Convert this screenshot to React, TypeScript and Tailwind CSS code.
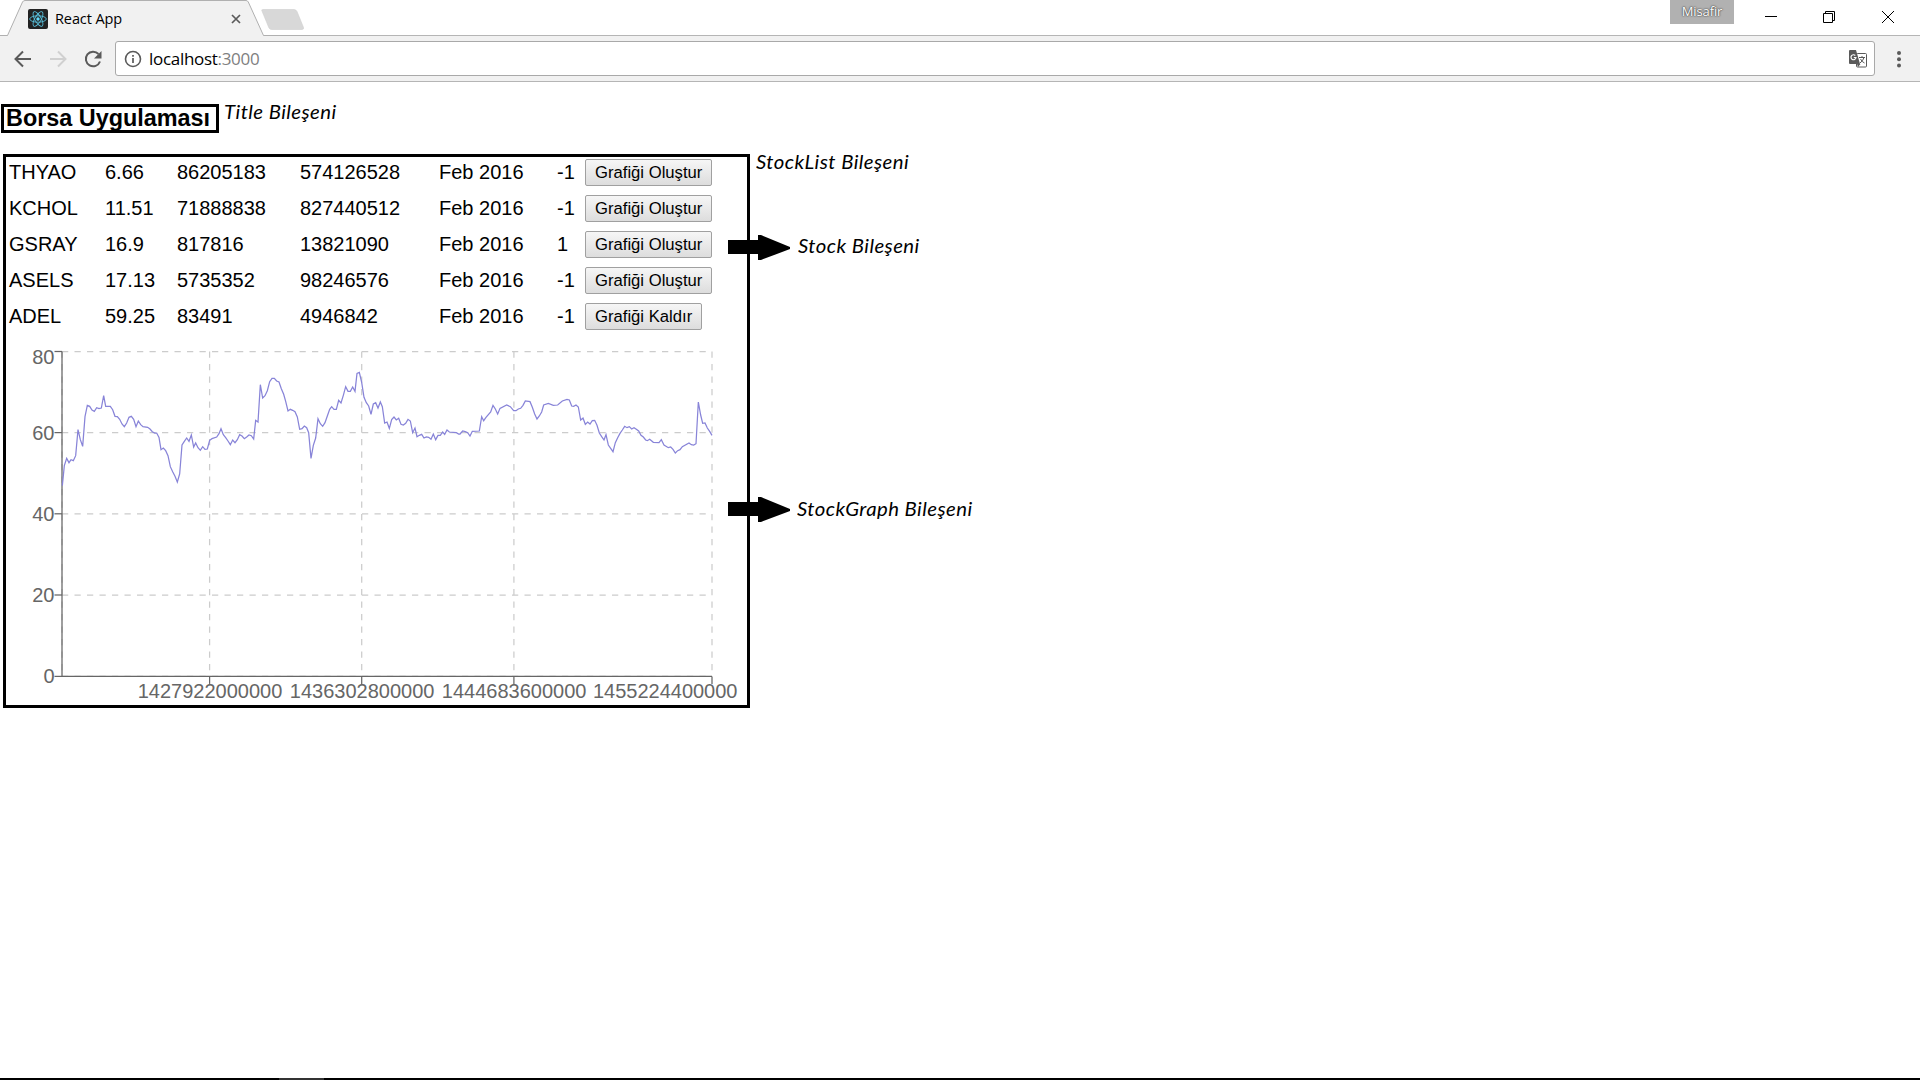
import type { ReactNode } from "react";

const stocks = [
  ["THYAO", "6.66", "86205183", "574126528", "Feb 2016", "-1", "Grafiği Oluştur"],
  ["KCHOL", "11.51", "71888838", "827440512", "Feb 2016", "-1", "Grafiği Oluştur"],
  ["GSRAY", "16.9", "817816", "13821090", "Feb 2016", "1", "Grafiği Oluştur"],
  ["ASELS", "17.13", "5735352", "98246576", "Feb 2016", "-1", "Grafiği Oluştur"],
  ["ADEL", "59.25", "83491", "4946842", "Feb 2016", "-1", "Grafiği Kaldır"],
];

/* Price series in thirds of a pixel, in three runs with their own x offset. */
const runs: [number, string][] = [
  [0, "67,437 73,377 80,355 87,368 93,359 100,362 107,347 114,269 121,299 128,319 135,230 142,196 149,199 156,210 163,214 170,203 177,206 184,204 191,167 197,199 211,199 218,209 225,229 232,230 239,238 246,252 253,260 260,249 267,232 274,229 281,238 288,260 295,243 302,254 309,260 323,262 330,267 337,275 344,279 350,279 357,292 363,329 370,324 377,332 384,347 391,380 398,395 405,409 412,426 419,402 426,315 433,304 440,294 447,304 454,285 461,321 467,309 474,323 481,331 488,320 495,328 502,327 509,301 516,296 530,291 537,281 543,266 550,284 557,293 564,303 571,314 578,300 585,308 592,299 599,284 606,288 613,296 620,291 627,285 634,287 641,297 647,241 654,246 661,134 668,174 675,167 682,152 689,125 696,115 703,115 710,123"],
  [600, "117,126 124,146 131,163 137,184 144,213 151,208 158,211 165,215 172,231 179,268 186,266 193,258 200,263 206,278 213,355 220,316 227,294 234,236 241,251 248,259 255,248 262,228 269,208 275,200 282,208 289,208 296,181 303,189 310,166 317,140 324,154 331,154 338,141 345,154 351,100 358,97 365,127 372,172 379,188 386,198 393,223 400,192 407,188 414,204 421,186 427,200 434,249 441,246 448,265 455,239 462,231 469,240 476,235 483,253 490,255 497,250 504,238 511,243 518,278 525,264 531,290 538,286 545,283 552,294 559,291 566,292 573,298 580,282 587,299 594,286 601,286 608,276 614,283 621,270 628,276 649,278 656,282"],
  [1260, "0,282 8,273 16,275 23,278 30,288 37,274 58,273 65,230 71,242 78,232 92,216 99,196 106,207 113,222 120,205 140,195 151,200 161,212 168,212 175,207 182,205 189,196 196,183 210,185 217,202 224,222 231,237 238,228 245,216 251,195 265,190 280,196 293,195 307,183 321,178 328,180 335,198 341,199 348,195 355,201 362,240 369,234 376,253 383,246 390,252 397,242 404,241 411,256 418,279 425,290 432,300 438,284 445,315 452,325 459,335 466,308 473,293 480,280 487,270 494,259 501,263 508,260 515,267 522,263 529,268 536,273 543,286 550,291 557,300 562,302 569,298 580,307 597,308 604,299 612,315 625,323 632,321 639,328 646,339 653,332 660,329 667,320 687,309 694,314 701,315 708,311 715,186 722,225 728,250 735,249 742,264 749,274 756,286"],
];
const points = runs
  .flatMap(([dx, s]) =>
    s.split(" ").map((p) => {
      const [x, y] = p.split(",").map(Number);
      return `${(40 + (x + dx) / 3).toFixed(2)},${(340 + y / 3).toFixed(2)}`;
    }),
  )
  .join(" ");

const yTicks: [string, number, number][] = [
  ["80", 351.5, 364],
  ["60", 432.6, 440],
  ["40", 513.8, 521],
  ["20", 595, 602],
  ["0", 676.4, 683],
];
/* label, tick position, label centre */
const xTicks: [string, number, number][] = [
  ["1427922000000", 209.6, 210],
  ["1436302800000", 361.7, 362.1],
  ["1444683600000", 513.9, 514.1],
  ["1455224400000", 712, 665.2],
];

function Chart() {
  return (
    <svg className="block font-['Liberation_Sans',sans-serif]" width="741" height="364" viewBox="6 341 741 364">
      <g stroke="#ccc" strokeWidth="1.25" strokeDasharray="6.25 6.25">
        {yTicks.map(([l, y]) => (
          <line key={l} x1="62" x2="712" y1={y} y2={y} />
        ))}
        {[62, ...xTicks.map((t) => t[1])].map((x) => (
          <line key={x} x1={x} x2={x} y1="351.4" y2="676.4" />
        ))}
      </g>
      <g stroke="#666" strokeWidth="1.25">
        <line x1="62" x2="712" y1="676.4" y2="676.4" />
        <line x1="62" x2="62" y1="351.4" y2="676.4" />
        {yTicks.map(([l, y]) => (
          <line key={l} x1="54.5" x2="62" y1={y} y2={y} />
        ))}
        {xTicks.map(([l, x]) => (
          <line key={l} x1={x} x2={x} y1="676.4" y2="683.9" />
        ))}
      </g>
      <g fill="#666" fontSize="20">
        {yTicks.map(([l, , b]) => (
          <text key={l} x="54.5" y={b} textAnchor="end">
            {l}
          </text>
        ))}
        {xTicks.map(([l, , c]) => (
          <text key={l} x={c} y="698" textAnchor="middle">
            {l}
          </text>
        ))}
      </g>
      <polyline points={points} fill="none" stroke="#8884d8" strokeWidth="1.25" />
    </svg>
  );
}

function Arrow({ className }: { className: string }) {
  return (
    <svg className={className} width="63" height="26" viewBox="0 0 63 26">
      <path d="M0 5H30V0H33L62 12V14L33 25H30V19H0Z" fill="#000" />
    </svg>
  );
}

function Note({ className, children }: { className: string; children: ReactNode }) {
  return (
    <span className={`absolute origin-left scale-x-110 whitespace-nowrap font-['Lato',sans-serif] text-[18.5px] leading-6 font-normal tracking-[0.4px] italic ${className}`}>
      {children}
    </span>
  );
}

function TabStrip() {
  return (
    <div className="relative flex h-9 items-start border-b border-[#b5b5b5] bg-white">
      <div className="relative h-9 w-[266px] shrink-0">
        <svg className="absolute top-0 left-0" width="310" height="36" viewBox="0 0 310 36">
          <path d="M0 36V35.500H7.500L22.500 2Q23.300 .5 25 .5H246Q247.500 .5 248.300 2L263.500 35.500H266V36Z" fill="#f1f1f1" />
          <path d="M0 35.500H7.500L22.500 2Q23.300 .5 25 .5H246Q247.500 .5 248.300 2L263.500 35.500H310" fill="none" stroke="#b0b0b0" />
          <path d="M263 9.500H294Q296 9.500 297 11.500L303.500 27.500Q304 29.500 302 29.500H272Q270 29.500 269 28L262 11Q261 9.500 263 9.500Z" fill="#d8d8d8" stroke="#cfcfcf" strokeWidth=".6" />
        </svg>
        <div className="relative flex h-9 items-center pt-[2px] pl-7">
          <svg width="20" height="20" viewBox="0 0 20 20">
            <rect width="20" height="20" rx="2" fill="#222" />
            <g fill="none" stroke="#61dafb" strokeWidth=".9" opacity=".85">
              <ellipse cx="10" cy="10" rx="8.300" ry="3.200" />
              <ellipse cx="10" cy="10" rx="8.300" ry="3.200" transform="rotate(60 10 10)" />
              <ellipse cx="10" cy="10" rx="8.300" ry="3.200" transform="rotate(120 10 10)" />
            </g>
            <circle cx="10" cy="10" r="1.700" fill="#61dafb" />
          </svg>
          <span className="ml-[7px] w-[170px] font-['Open_Sans',sans-serif] text-[14.5px] tracking-[-0.1px] text-black">React App</span>
          <svg className="ml-[6px]" width="10" height="10" viewBox="0 0 10 10" stroke="#5a5a5a" strokeWidth="1.700">
            <path d="M1 1L9 9M9 1L1 9" />
          </svg>
        </div>
      </div>
      <div className="ml-auto flex h-full items-start">
        <div className="mr-[31px] flex h-6 w-16 items-center justify-center bg-[#b1b1b1] font-['Open_Sans',sans-serif] text-[13px] tracking-[-0.1px] text-white [text-shadow:0_0_2px_#333,0_0_1px_#444]">
          Misafir
        </div>
        <svg width="155" height="32" viewBox="1765 0 155 32" fill="none" stroke="#000">
          <path d="M1765 16.500H1777" />
          <path d="M1823.500 13.500H1832.500V22.500H1823.500ZM1825.500 13V11.500H1834.500V20.500H1833" />
          <path d="M1882 11L1894 23M1894 11L1882 23" />
        </svg>
      </div>
    </div>
  );
}

function Toolbar() {
  return (
    <div className="flex h-[46px] items-center border-b border-[#b5b5b5] bg-[#f1f1f1] pr-[18px]">
      <svg width="115" height="45" viewBox="0 36 115 45" fill="none" strokeWidth="2">
        <path d="M31 59H16M23 51.500L15.500 59L23 66.500" stroke="#5a5a5a" />
        <path d="M50 59H65M58 51.500L65.500 59L58 66.500" stroke="#d0d0d0" />
        <path d="M98.500 54A7.300 7.300 0 1 0 100 61.500" stroke="#5a5a5a" />
        <path d="M101.500 51V58.500H94Z" fill="#5a5a5a" />
      </svg>
      <div className="flex h-[35px] flex-1 items-center rounded-[3px] border border-[#a9a9a9] bg-white pr-[7px] pl-[8px]">
        <svg width="18" height="18" viewBox="0 0 18 18" fill="none" stroke="#5a5a5a">
          <circle cx="9" cy="9" r="7.500" strokeWidth="1.600" />
          <path d="M9 8V13M9 5V6.700" strokeWidth="1.700" />
        </svg>
        <span className="ml-[7px] font-['Open_Sans',sans-serif] text-[17px] tracking-[-0.3px] text-black">
          localhost<span className="text-[#808080]">:3000</span>
        </span>
        <svg className="ml-auto" width="18" height="18" viewBox="0 0 18 18">
          <rect x="7.500" y="3.500" width="10" height="13.500" rx="1" fill="#fff" stroke="#5a5a5a" />
          <path d="M1 0H7L11 14H1Q0 14 0 13V1Q0 0 1 0ZM8 14H11.500L9 17Z" fill="#5a5a5a" />
          <path d="M6.300 5.500A2.500 2.500 0 1 0 7 7.500H4.800" fill="none" stroke="#fff" strokeWidth="1.200" />
          <path d="M10 7.500H16M13 6V7.500M15 7.500Q14 11 11 13M11.500 9Q13 12 15.500 13" fill="none" stroke="#5a5a5a" />
        </svg>
      </div>
      <svg className="ml-[21px]" width="6" height="18" viewBox="0 0 6 18" fill="#5a5a5a">
        <circle cx="3" cy="3" r="2" />
        <circle cx="3" cy="9.200" r="2" />
        <circle cx="3" cy="15.400" r="2" />
      </svg>
    </div>
  );
}

export default function App() {
  return (
    <div className="flex h-[1080px] w-[1920px] flex-col overflow-hidden bg-white text-black">
      <TabStrip />
      <Toolbar />
      <main className="relative flex-1 pt-[22px] font-['Liberation_Sans',sans-serif]">
        <h1 className="ml-px flex h-[29px] w-[218px] items-center border-[3px] border-black pl-[2px] text-[23.4px] leading-none font-bold whitespace-nowrap">
          Borsa Uygulaması
        </h1>
        <section className="mt-[21px] ml-[3px] h-[554px] w-[747px] border-[3px] border-black">
          <div className="h-[184px]">
            {stocks.map(([name, price, lot, volume, date, diff, action]) => (
              <div key={name} className="grid h-9 grid-cols-[96px_72px_123px_139px_118px_160px] pl-[3px] text-xl leading-[30px]">
                <span>{name}</span>
                <span>{price}</span>
                <span>{lot}</span>
                <span>{volume}</span>
                <span>{date}</span>
                <span className="flex">
                  <span className="w-[28px] shrink-0">{diff}</span>
                  <button className="mt-[2px] h-[27px] rounded-[2px] border border-[#a0a0a0] bg-linear-to-b from-[#f6f6f6] to-[#dddddd] px-[9px] pt-px text-[16.67px] leading-none whitespace-nowrap">
                    {action}
                  </button>
                </span>
              </div>
            ))}
          </div>
          <Chart />
        </section>

        <Note className="top-[18px] left-[224px]">Title Bileşeni</Note>
        <Note className="top-[68px] left-[756px]">StockList Bileşeni</Note>
        <Note className="top-[152px] left-[798px]">Stock Bileşeni</Note>
        <Note className="top-[415px] left-[797px]">StockGraph Bileşeni</Note>
        <Arrow className="absolute top-[153px] left-[728px]" />
        <Arrow className="absolute top-[415px] left-[728px]" />
      </main>
      <footer className="flex h-[2px] bg-black">
        <div className="ml-[279px] w-[45px] bg-[#333]" />
      </footer>
    </div>
  );
}
